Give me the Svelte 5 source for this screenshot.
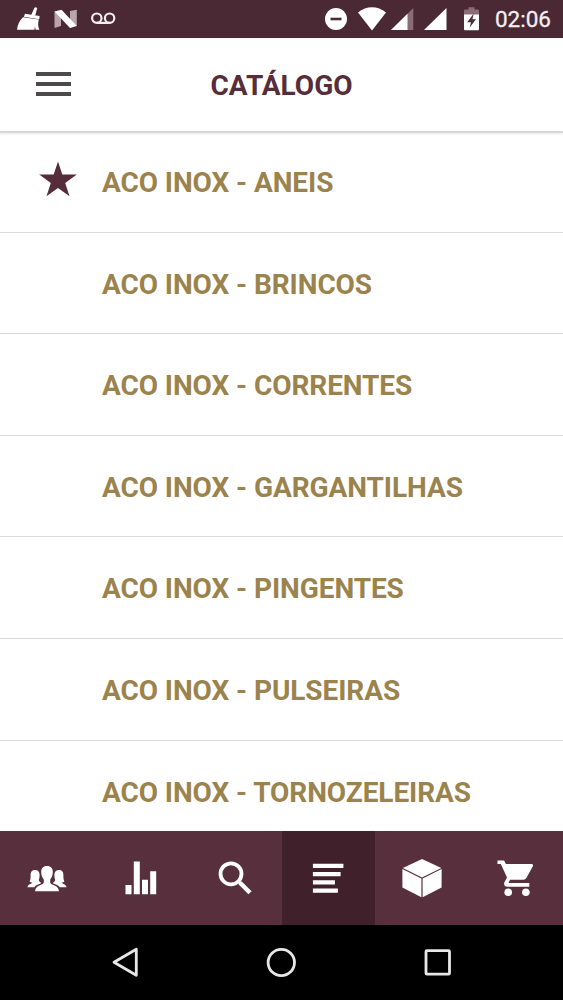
<script lang="ts">
/**
 * Catalog screen
 *
 * Status bar, header, category list, tab bar and system navigation.
 */

type Category = { id: number; name: string; favorite: boolean };

const categories: Category[] = [
	{ id: 1, name: 'ACO INOX - ANEIS', favorite: true },
	{ id: 2, name: 'ACO INOX - BRINCOS', favorite: false },
	{ id: 3, name: 'ACO INOX - CORRENTES', favorite: false },
	{ id: 4, name: 'ACO INOX - GARGANTILHAS', favorite: false },
	{ id: 5, name: 'ACO INOX - PINGENTES', favorite: false },
	{ id: 6, name: 'ACO INOX - PULSEIRAS', favorite: false },
	{ id: 7, name: 'ACO INOX - TORNOZELEIRAS', favorite: false }
];

const tabs = ['clients', 'stats', 'search', 'catalog', 'products', 'cart'];

let activeTab = $state('catalog');
</script>

<div class="screen">
	<div class="status-bar">
		<div class="notifications">
			<!-- Cleaner -->
			<svg width="24" height="24" viewBox="0 0 24 24" fill="#fff">
				<path d="M14 8.500 17.300 1Q18.800-.600 20.200 1.300L18.200 8.500z" />
				<path d="M8 6.800 22.600 8.900 22.300 12.300 6.800 9.700z" />
				<path d="M6 10.200 21.800 12.600C20.800 16.500 21 20 22.400 22.800H18.600L18 19.500 17.400 22.800H0C.500 18 2.300 13.500 6 10.200z" />
			</svg>
			<!-- Android N -->
			<svg class="android-n" width="24" height="20" viewBox="0 0 24 20">
				<path d="M.500 2.500 7 3.800V17L.500 19zM16 2 22.800.800V17L16 16z" fill="#b9a5ab" />
				<path d="M.500 2.500 7.500.800 22.800 17 16 19z" fill="#fff" />
			</svg>
			<!-- Voicemail -->
			<svg class="voicemail" width="26" height="14" viewBox="0 0 26 14" fill="none" stroke="#f4eef0" stroke-width="2.200">
				<circle cx="5.800" cy="6.200" r="4.700" />
				<circle cx="18.600" cy="6.200" r="4.700" />
				<path d="M5.800 10.900h12.800" />
			</svg>
		</div>
		<div class="indicators">
			<svg width="23" height="24" viewBox="0 0 23 24">
				<circle cx="11" cy="12" r="11" fill="#fff" />
				<path d="M5.500 12h11" stroke="#4a2b36" stroke-width="2.600" />
			</svg>
			<svg class="wifi" width="28" height="24" viewBox="0 0 28 24" fill="#fff">
				<path d="M0 5.500C8.500-1.500 19.500-1.500 28 5.500L14 23.500z" />
			</svg>
			<svg class="signal-low" width="23" height="24" viewBox="0 0 23 24">
				<path d="M22.300 1V23H0z" fill="#8a6c77" />
				<path d="M16.500 6.700V23H0z" fill="#fff" />
			</svg>
			<svg class="signal" width="23" height="24" viewBox="0 0 23 24" fill="#fff">
				<path d="M22.500 1V23H0z" />
			</svg>
			<svg class="battery" width="16" height="24" viewBox="0 0 16 24">
				<path d="M0 8V3.500Q0 2.500 1 2.500H4.500V.300H10.500V2.500H14Q15 2.500 15 3.500V8z" fill="#8a6c77" />
				<path d="M0 7.500H15V22.300Q15 23.300 14 23.300H1Q0 23.300 0 22.300z" fill="#fff" />
				<path d="M9.800 6.500 3.200 15.200H7L5.700 20.500 12 12.200H8.400z" fill="#4a2b36" />
			</svg>
			<span class="clock">02:06</span>
		</div>
	</div>

	<header class="header">
		<button type="button" class="menu-button" aria-label="Menu">
			<span></span>
			<span></span>
			<span></span>
		</button>
		<h1 class="title">CATÁLOGO</h1>
	</header>

	<ul class="category-list">
		{#each categories as category (category.id)}
			<li class="category">
				<div class="marker">
					{#if category.favorite}
						<svg width="38" height="36" viewBox="0 0 38 36" fill="#552d3b">
							<path d="M19 .500 23.300 13.600H37.800L26.200 21.900 30.500 35.200 19 27 7.500 35.200 11.800 21.900.200 13.600H14.700z" />
						</svg>
					{/if}
				</div>
				<span class="category-name">{category.name}</span>
			</li>
		{/each}
	</ul>

	<nav class="tab-bar">
		{#each tabs as tab}
			<button
				type="button"
				class="tab"
				class:active={activeTab === tab}
				onclick={() => (activeTab = tab)}
				aria-label={tab}
			>
				{#if tab === 'clients'}
					<svg width="40" height="40" viewBox="0 0 40 40" fill="#fff">
						<path d="M8 11C4.900 11 3.500 13.200 3.600 16.500 3.700 19.500 3.200 21.500 2.600 22.500 3.500 23.300 4.500 23.500 5.300 23.600 4.800 25.200.600 25.300.500 28.200H7.300C8.500 26 12.300 25.500 14 24.300L13.600 23.300C12.800 23 12 22 11.800 21 12.500 19 12.800 16.500 12.500 14.500 12 12 10.200 11 8 11z" />
						<path d="M32 11C35.100 11 36.500 13.200 36.400 16.500 36.300 19.500 36.800 21.500 37.400 22.500 36.500 23.300 35.500 23.500 34.700 23.600 35.200 25.200 39.400 25.300 39.500 28.200H32.700C31.500 26 27.700 25.500 26 24.300L26.400 23.300C27.200 23 28 22 28.200 21 27.500 19 27.200 16.500 27.500 14.500 28 12 29.800 11 32 11z" />
						<path d="M20 7C15.900 7 14 9.700 14.200 13.300 14.200 16.200 15.300 18.700 16.800 20.400V23.400C16.300 26.400 8.500 25.500 8 32.200H32C31.500 25.500 23.700 26.400 23.200 23.400V20.400C24.700 18.700 25.800 16.200 25.800 13.300 26 9.700 24.100 7 20 7z" />
					</svg>
				{:else if tab === 'stats'}
					<svg width="40" height="40" viewBox="0 0 40 40" fill="#fff">
						<path d="M4.500 26h6v9.200h-6zM12.800 2.500h6v32.700h-6zM21 20.800h6v14.400h-6zM29.200 12.300h6v22.900h-6z" />
					</svg>
				{:else if tab === 'search'}
					<svg width="40" height="40" viewBox="0 0 40 40" fill="none" stroke="#fff">
						<circle cx="16" cy="14.800" r="10.500" stroke-width="3.800" />
						<path d="M22.800 21.800 25.500 24.500" stroke-width="3" />
						<path d="M25 23.800 35 33.700" stroke-width="4.400" />
					</svg>
				{:else if tab === 'catalog'}
					<svg width="40" height="40" viewBox="0 0 40 40" fill="#fff">
						<path d="M4.900 4.800h30.500v4.300H4.900zM4.900 13h27.700v4.300H4.900zM4.900 21.200h22v4.300h-22zM4.900 29.400h25v4.300h-25z" />
					</svg>
				{:else if tab === 'products'}
					<svg width="40" height="40" viewBox="0 0 40 40" fill="#fff">
						<path d="M20 0 39.300 9 20 18.600.900 9z" />
						<path d="M.400 10 19.400 19.500V38.300L.400 28.500z" />
						<path d="M20.600 19.500 39.600 10V28.500L20.600 38.300z" />
					</svg>
				{:else}
					<svg width="40" height="40" viewBox="0 0 40 40" fill="#fff">
						<path d="M1.500 1.500H8.100L9.900 5.100H35.800Q37.500 5.300 37 7.100L30.400 19Q29.400 20.700 27.500 20.700H14L12.500 24H33.300V27.800H11.500C8.500 27.800 7.400 25.300 8.500 22.900L11 18.400 4.800 5.100H1.500z" />
						<circle cx="12.200" cy="33.200" r="3.800" />
						<circle cx="29.900" cy="33.200" r="3.800" />
					</svg>
				{/if}
			</button>
		{/each}
	</nav>

	<div class="system-nav">
		<svg width="30" height="32" viewBox="0 0 30 32">
			<path d="M27.300 3.300V29.300L5 16.300z" />
		</svg>
		<svg width="32" height="32" viewBox="0 0 32 32">
			<circle cx="16.300" cy="16.500" r="13.200" />
		</svg>
		<svg width="30" height="32" viewBox="0 0 30 32">
			<rect x="4" y="4.700" width="23.500" height="23.500" rx="1" />
		</svg>
	</div>
</div>

<style>
	:global(body) {
		background-color: #ffffff;
	}

	.screen {
		display: flex;
		flex-direction: column;
		height: 1000px;
		overflow: hidden;
		font-family: Roboto, 'Liberation Sans', sans-serif;
	}

	svg {
		display: block;
		flex-shrink: 0;
	}

	button {
		padding: 0;
		border: none;
		background: none;
		cursor: pointer;
	}

	.status-bar {
		display: flex;
		justify-content: space-between;
		align-items: center;
		flex: 0 0 37.5px;
		box-sizing: border-box;
		padding: 1px 12px 0 17px;
		background-color: #4a2834;
	}

	.notifications,
	.indicators {
		display: flex;
		align-items: center;
	}

	.android-n {
		margin-left: 13px;
	}

	.voicemail {
		margin-left: 13px;
	}

	.wifi {
		margin-left: 10px;
	}

	.signal-low {
		margin-left: 5px;
	}

	.signal {
		margin-left: 10px;
	}

	.battery {
		margin-left: 17px;
	}

	.clock {
		margin-left: 15px;
		font-size: 22.5px;
		line-height: 24px;
		color: #f6eef1;
		-webkit-text-stroke: 0.3px #f6eef1;
	}

	.header {
		position: relative;
		display: grid;
		grid-template-columns: 107px 1fr 107px;
		align-items: center;
		flex: 0 0 93.5px;
		box-shadow:
			0 2px 0 #dad8d9,
			0 3px 2px rgba(0, 0, 0, 0.1);
		background-color: #ffffff;
	}

	.menu-button {
		display: flex;
		flex-direction: column;
		gap: 6px;
		width: 35px;
		margin-left: 36px;
	}

	.menu-button span {
		height: 4px;
		background-color: #4c4a4b;
	}

	.title {
		margin: 3px 0 0;
		font-size: 28px;
		font-weight: 700;
		text-align: center;
		color: #552d3b;
	}

	.category-list {
		flex: 1;
		min-height: 0;
		margin: 0;
		padding: 0;
		overflow: hidden;
		list-style: none;
	}

	.category {
		display: flex;
		align-items: center;
		height: 101.6px;
		box-sizing: border-box;
		padding-top: 2.4px;
		border-bottom: 1.5px solid #dddadb;
	}

	.marker {
		flex: 0 0 63px;
		margin: -6px 0 0 39px;
	}

	.category-name {
		font-size: 28px;
		font-weight: 700;
		letter-spacing: -0.08px;
		white-space: nowrap;
		color: #9b834e;
	}

	.tab-bar {
		display: grid;
		grid-template-columns: repeat(6, 1fr);
		flex: 0 0 94px;
		background-color: #58303d;
	}

	.tab {
		display: flex;
		align-items: center;
		justify-content: center;
		padding-top: 2px;
	}

	.tab.active {
		background-color: #40212b;
	}

	.system-nav {
		display: flex;
		align-items: center;
		justify-content: space-between;
		flex: 0 0 75px;
		box-sizing: border-box;
		padding: 0 111px 1px 109px;
		background-color: #000000;
	}

	.system-nav svg {
		fill: none;
		stroke: #e8e6e7;
		stroke-width: 2.8;
		stroke-linejoin: round;
	}
</style>
